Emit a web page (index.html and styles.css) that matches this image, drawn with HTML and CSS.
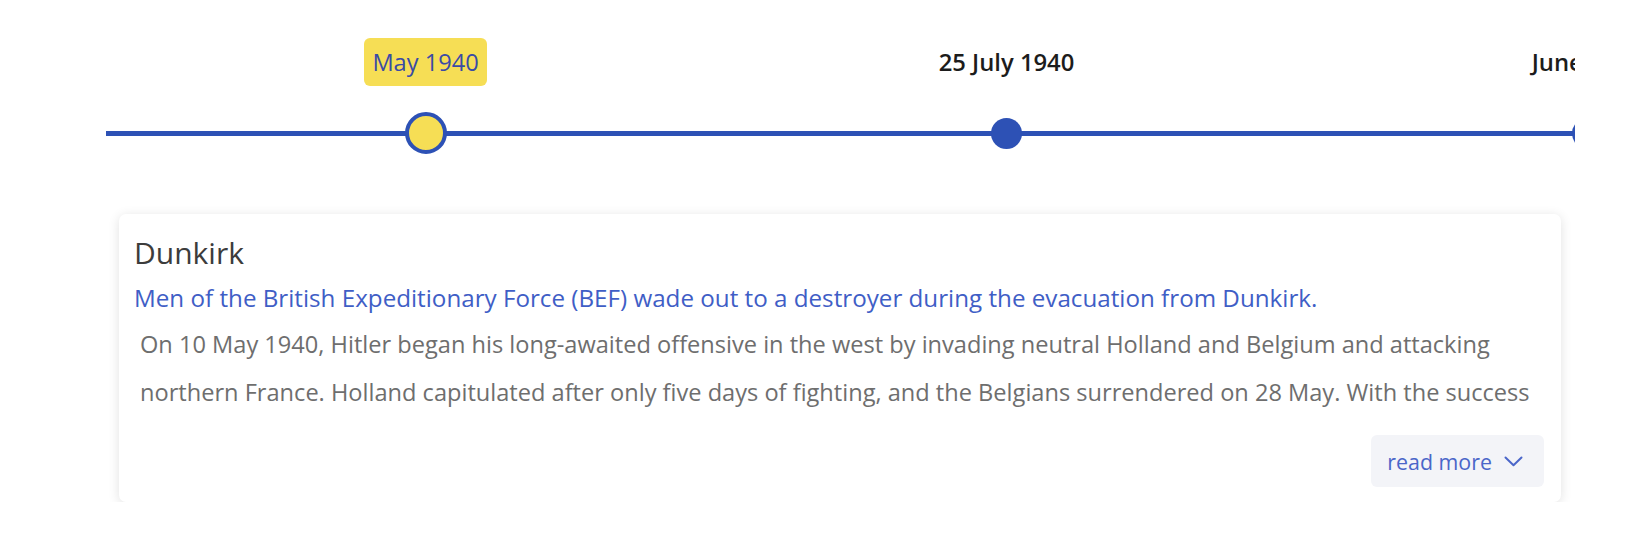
FILE: index.html
```html
<!DOCTYPE html>
<html lang="en">
<head>
<meta charset="utf-8">
<title>Timeline</title>
<link rel="stylesheet" href="styles.css">
</head>
<body>
<div class="timeline">
  <div class="row labels">
    <div class="slot"><span class="label active">May 1940</span></div>
    <div class="slot"><span class="label">25 July 1940</span></div>
    <div class="slot"><span class="label">June 1940</span></div>
  </div>
  <div class="row axis">
    <div class="slot"><span class="dot active"></span></div>
    <div class="slot"><span class="dot"></span></div>
    <div class="slot"><span class="dot"></span></div>
  </div>
</div>
<div class="card">
  <h2 class="card-title">Dunkirk</h2>
  <p class="card-subtitle">Men of the British Expeditionary Force (BEF) wade out to a destroyer during the evacuation from Dunkirk.</p>
  <div class="card-text">
    <span class="line">On 10 May 1940, Hitler began his long-awaited offensive in the west by invading neutral Holland and Belgium and attacking</span>
    <span class="line">northern France. Holland capitulated after only five days of fighting, and the Belgians surrendered on 28 May. With the success</span>
  </div>
  <div class="card-actions">
    <button class="read-more" type="button">read more
      <svg width="19" height="11" viewBox="0 0 19 11" aria-hidden="true"><polyline points="1.5,1.5 9.5,9.2 17.5,1.5" fill="none" stroke="currentColor" stroke-width="2" stroke-linecap="round" stroke-linejoin="round"/></svg>
    </button>
  </div>
</div>
</body>
</html>
```
FILE: styles.css
```css
html, body {
  margin: 0;
  padding: 0;
  background: #ffffff;
  font-family: "Open Sans", "Noto Sans", sans-serif;
}

.timeline {
  margin: 38px 0 0 106px;
  width: 1469px;
  overflow: hidden;
}

.row {
  display: flex;
  padding-left: 29px;
}

.slot {
  flex: 0 0 581px;
  display: flex;
  justify-content: center;
  align-items: center;
}

.labels {
  height: 48px;
}

.label {
  font-size: 23.8px;
  font-weight: 600;
  color: #1c1c1c;
  white-space: nowrap;
  line-height: 48px;
}

.label.active {
  background: #f6de55;
  color: #3a4ba6;
  font-weight: 400;
  font-size: 23.6px;
  padding: 0 8px;
  border-radius: 6px;
}

.axis {
  margin-top: 26px;
  height: 42px;
  background: linear-gradient(#2d51b5, #2d51b5) 0 50% / 100% 5px no-repeat;
}

.dot {
  width: 31px;
  height: 31px;
  border-radius: 50%;
  background: #2d51b5;
}

.dot.active {
  box-sizing: border-box;
  width: 42px;
  height: 42px;
  border: 4px solid #2d51b5;
  background: #f6de55;
}

.card {
  box-sizing: border-box;
  margin: 60px 0 0 119px;
  width: 1442px;
  padding: 16px 17px 15px 15px;
  background: #ffffff;
  border-radius: 7px;
  box-shadow: 0 2px 12px rgba(0, 0, 0, 0.12);
}

.card-title {
  margin: 0;
  font-size: 30px;
  line-height: 46px;
  font-weight: 400;
  color: #3c3c3c;
}

.card-subtitle {
  margin: 0;
  font-size: 24.2px;
  line-height: 44px;
  font-weight: 400;
  color: #3f5ec6;
  white-space: nowrap;
}

.card-text {
  padding-left: 6px;
  font-size: 23.6px;
  line-height: 48px;
  color: #6e6e6e;
  height: 96px;
  overflow: hidden;
}

.card-text .line {
  display: block;
  white-space: nowrap;
}

.card-actions {
  display: flex;
  justify-content: flex-end;
  margin-top: 19px;
}

.read-more {
  display: flex;
  align-items: center;
  gap: 12px;
  height: 52px;
  padding: 0 21px 0 16px;
  border: 0;
  border-radius: 6px;
  background: #f3f4f8;
  color: #4a66c9;
  font-family: inherit;
  font-size: 21.4px;
  cursor: pointer;
}

.read-more svg {
  display: block;
}
```
